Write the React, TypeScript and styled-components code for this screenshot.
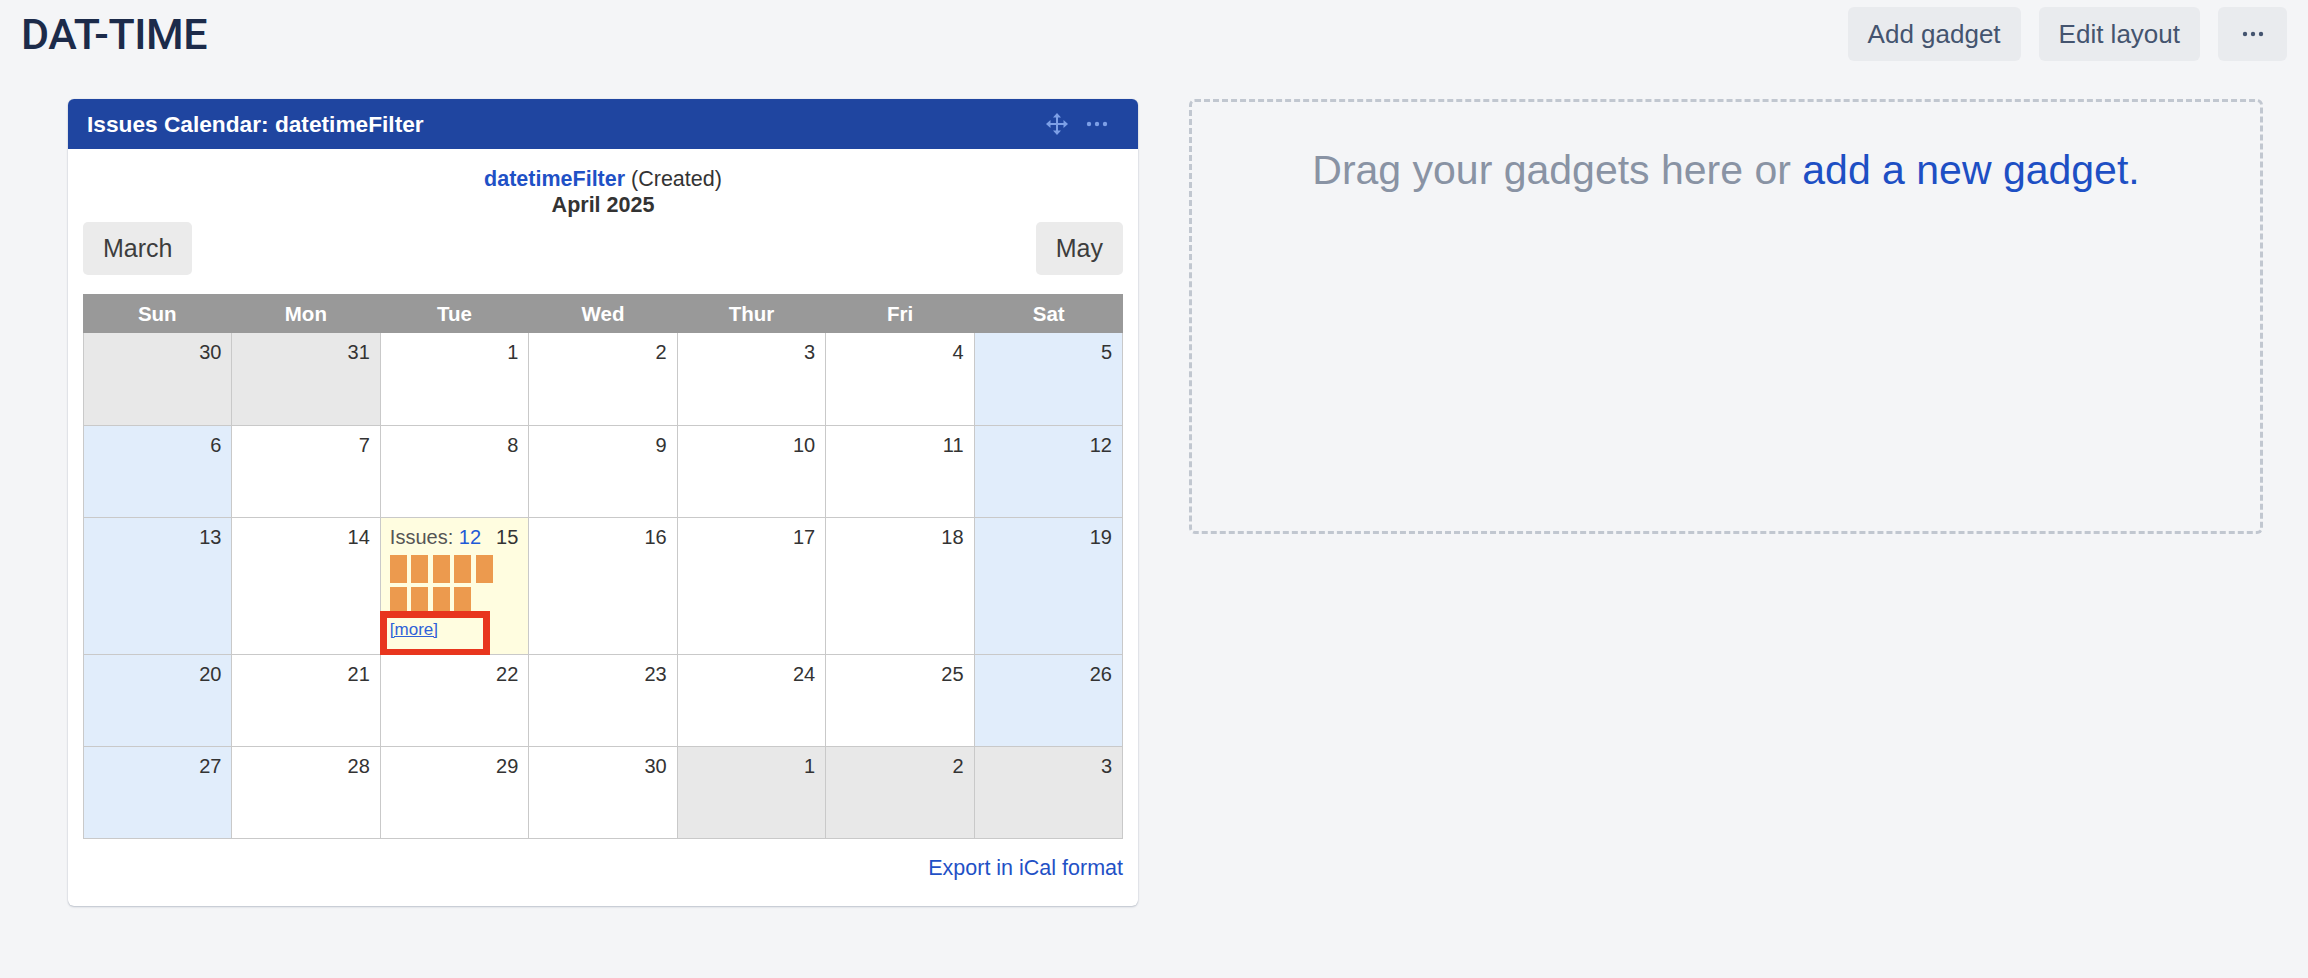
import React from "react";
import styled, { createGlobalStyle } from "styled-components";

const GlobalStyle = createGlobalStyle`
  html, body { margin: 0; padding: 0; background: #f4f5f7; }
  body { font-family: "Liberation Sans", Arial, sans-serif; }
`;

const Page = styled.div`
  width: 2308px;
  height: 978px;
  box-sizing: border-box;
  padding-top: 7px;
  background: #f4f5f7;
  overflow: hidden;
`;

const TopBar = styled.header`
  display: flex;
  align-items: center;
  justify-content: space-between;
  height: 54px;
  padding: 0 21px 0 21px;
`;

const Title = styled.h1`
  margin: 0;
  font-family: Roboto, "Liberation Sans", sans-serif;
  font-weight: 500;
  font-size: 43px;
  letter-spacing: -0.4px;
  line-height: 54px;
  color: #1c2b4a;
`;

const Actions = styled.div`
  display: flex;
  gap: 18px;
`;

const ActionButton = styled.button<{ $square?: boolean }>`
  height: 54px;
  padding: ${(p) => (p.$square ? "0" : "0 20px")};
  width: ${(p) => (p.$square ? "69px" : "auto")};
  border: none;
  border-radius: 6px;
  background: #e9ebee;
  color: #44546f;
  font-family: "Liberation Sans", Arial, sans-serif;
  font-size: 26px;
  display: flex;
  align-items: center;
  justify-content: center;
`;

const Main = styled.main`
  display: grid;
  grid-template-columns: 1070px 1074px;
  column-gap: 51px;
  align-items: start;
  margin-top: 38px;
  padding-left: 68px;
`;

const Panel = styled.section`
  background: #fff;
  border-radius: 6px;
  overflow: hidden;
  box-shadow: 0 1px 2px rgba(9, 30, 66, 0.22), 0 0 1px rgba(9, 30, 66, 0.2);
`;

const PanelHeader = styled.div`
  height: 50px;
  background: #1f45a0;
  display: flex;
  align-items: center;
  justify-content: space-between;
  padding: 0 30px 0 19px;
  color: #fff;
  font-weight: 700;
  font-size: 22.7px;
`;

const HeaderIcons = styled.div`
  display: flex;
  align-items: center;
  gap: 17px;
  color: #7d9fe6;
`;

const PanelBody = styled.div`
  padding: 17px 15px 26px;
`;

const FilterInfo = styled.div`
  text-align: center;
  font-size: 21.5px;
  line-height: 26px;
  color: #333;
`;

const FilterLink = styled.a`
  color: #1f51c6;
  font-weight: 700;
  text-decoration: none;
`;

const MonthTitle = styled.div`
  font-weight: 700;
`;

const NavRow = styled.div`
  display: flex;
  justify-content: space-between;
  margin-top: 4px;
`;

const NavButton = styled.button`
  height: 53px;
  padding: 0 20px;
  border: none;
  border-radius: 5px;
  background: #ebebeb;
  color: #3d3d3d;
  font-family: "Liberation Sans", Arial, sans-serif;
  font-size: 25px;
`;

const CalHead = styled.div`
  margin-top: 19px;
  display: grid;
  grid-template-columns: repeat(7, 1fr);
  height: 39px;
  background: #999999;
`;

const HeadCell = styled.div`
  display: flex;
  align-items: center;
  justify-content: center;
  color: #fff;
  font-weight: 700;
  font-size: 20.5px;
`;

const CalBody = styled.div`
  display: grid;
  grid-template-columns: repeat(7, 1fr);
  grid-template-rows: 93px 92px 137px 92px 92px;
  border-left: 1px solid #c9c9c9;
`;

type Kind = "normal" | "other" | "weekend" | "today";

const cellBg: Record<Kind, string> = {
  normal: "#ffffff",
  other: "#e8e8e8",
  weekend: "#e1edfb",
  today: "#fffde0",
};

const DayCell = styled.div<{ $kind: Kind }>`
  position: relative;
  box-sizing: border-box;
  padding: 7px 10px 0 9px;
  background: ${(p) => cellBg[p.$kind]};
  border-right: 1px solid #c9c9c9;
  border-bottom: 1px solid #c9c9c9;
  font-size: 20px;
  line-height: 24px;
  color: #333;
  text-align: right;
`;

const IssueLine = styled.div`
  display: flex;
  justify-content: space-between;
`;

const IssueLabel = styled.span`
  color: #555;
`;

const IssueCount = styled.a`
  color: #1f5bd6;
  text-decoration: none;
`;

const Squares = styled.div`
  display: grid;
  grid-template-columns: repeat(5, 17px);
  column-gap: 4.5px;
  row-gap: 4px;
  margin-top: 6px;
`;

const Square = styled.span`
  display: block;
  width: 17px;
  height: 28px;
  background: #ec9a4e;
`;

const MoreLink = styled.a`
  display: block;
  margin-top: 5px;
  text-align: left;
  font-size: 17px;
  line-height: 20px;
  color: #2f62d8;
  text-decoration: underline;
`;

const Highlight = styled.span`
  position: absolute;
  left: -1px;
  top: 93px;
  width: 110px;
  height: 45px;
  box-sizing: border-box;
  border: 7px solid #e8361e;
  pointer-events: none;
`;

const ExportRow = styled.div`
  margin-top: 17px;
  text-align: right;
  font-size: 21.5px;
  line-height: 24px;
`;

const ExportLink = styled.a`
  color: #1f51c6;
  text-decoration: none;
`;

const DropZone = styled.div`
  height: 435px;
  box-sizing: border-box;
  border: 3px dashed #c1c7d0;
  border-radius: 6px;
  padding-top: 44px;
  text-align: center;
  font-size: 41px;
  line-height: 48px;
  color: #8993a4;
`;

const DropLink = styled.a`
  color: #1d4fc4;
  text-decoration: none;
`;

const MoveIcon = () => (
  <svg width="24" height="24" viewBox="0 0 24 24" fill="currentColor">
    <rect x="11" y="4" width="2" height="16" />
    <rect x="4" y="11" width="16" height="2" />
    <polygon points="12,1 8,5.5 16,5.5" />
    <polygon points="12,23 8,18.5 16,18.5" />
    <polygon points="1,12 5.5,8 5.5,16" />
    <polygon points="23,12 18.5,8 18.5,16" />
  </svg>
);

const DotsIcon = ({ size = 22, color = "currentColor" }: { size?: number; color?: string }) => (
  <svg width={size} height="6" viewBox="0 0 22 6" fill={color}>
    <circle cx="3" cy="3" r="2.2" />
    <circle cx="11" cy="3" r="2.2" />
    <circle cx="19" cy="3" r="2.2" />
  </svg>
);

type Day = { n: number; kind: Kind; issues?: boolean };

const weeks: Day[][] = [
  [
    { n: 30, kind: "other" },
    { n: 31, kind: "other" },
    { n: 1, kind: "normal" },
    { n: 2, kind: "normal" },
    { n: 3, kind: "normal" },
    { n: 4, kind: "normal" },
    { n: 5, kind: "weekend" },
  ],
  [
    { n: 6, kind: "weekend" },
    { n: 7, kind: "normal" },
    { n: 8, kind: "normal" },
    { n: 9, kind: "normal" },
    { n: 10, kind: "normal" },
    { n: 11, kind: "normal" },
    { n: 12, kind: "weekend" },
  ],
  [
    { n: 13, kind: "weekend" },
    { n: 14, kind: "normal" },
    { n: 15, kind: "today", issues: true },
    { n: 16, kind: "normal" },
    { n: 17, kind: "normal" },
    { n: 18, kind: "normal" },
    { n: 19, kind: "weekend" },
  ],
  [
    { n: 20, kind: "weekend" },
    { n: 21, kind: "normal" },
    { n: 22, kind: "normal" },
    { n: 23, kind: "normal" },
    { n: 24, kind: "normal" },
    { n: 25, kind: "normal" },
    { n: 26, kind: "weekend" },
  ],
  [
    { n: 27, kind: "weekend" },
    { n: 28, kind: "normal" },
    { n: 29, kind: "normal" },
    { n: 30, kind: "normal" },
    { n: 1, kind: "other" },
    { n: 2, kind: "other" },
    { n: 3, kind: "other" },
  ],
];

const dayNames = ["Sun", "Mon", "Tue", "Wed", "Thur", "Fri", "Sat"];

export default function App() {
  return (
    <>
      <GlobalStyle />
      <Page>
        <TopBar>
          <Title>DAT-TIME</Title>
          <Actions>
            <ActionButton>Add gadget</ActionButton>
            <ActionButton>Edit layout</ActionButton>
            <ActionButton $square>
              <DotsIcon size={22} color="#44546f" />
            </ActionButton>
          </Actions>
        </TopBar>
        <Main>
          <Panel>
            <PanelHeader>
              <span>Issues Calendar: datetimeFilter</span>
              <HeaderIcons>
                <MoveIcon />
                <DotsIcon />
              </HeaderIcons>
            </PanelHeader>
            <PanelBody>
              <FilterInfo>
                <div>
                  <FilterLink href="#">datetimeFilter</FilterLink> (Created)
                </div>
                <MonthTitle>April 2025</MonthTitle>
              </FilterInfo>
              <NavRow>
                <NavButton>March</NavButton>
                <NavButton>May</NavButton>
              </NavRow>
              <CalHead>
                {dayNames.map((d) => (
                  <HeadCell key={d}>{d}</HeadCell>
                ))}
              </CalHead>
              <CalBody>
                {weeks.flat().map((day, i) =>
                  day.issues ? (
                    <DayCell key={i} $kind={day.kind}>
                      <IssueLine>
                        <span>
                          <IssueLabel>Issues: </IssueLabel>
                          <IssueCount href="#">12</IssueCount>
                        </span>
                        <span>{day.n}</span>
                      </IssueLine>
                      <Squares>
                        {Array.from({ length: 9 }).map((_, k) => (
                          <Square key={k} />
                        ))}
                      </Squares>
                      <MoreLink href="#">[more]</MoreLink>
                      <Highlight />
                    </DayCell>
                  ) : (
                    <DayCell key={i} $kind={day.kind}>
                      {day.n}
                    </DayCell>
                  )
                )}
              </CalBody>
              <ExportRow>
                <ExportLink href="#">Export in iCal format</ExportLink>
              </ExportRow>
            </PanelBody>
          </Panel>
          <DropZone>
            Drag your gadgets here or <DropLink href="#">add a new gadget.</DropLink>
          </DropZone>
        </Main>
      </Page>
    </>
  );
}
